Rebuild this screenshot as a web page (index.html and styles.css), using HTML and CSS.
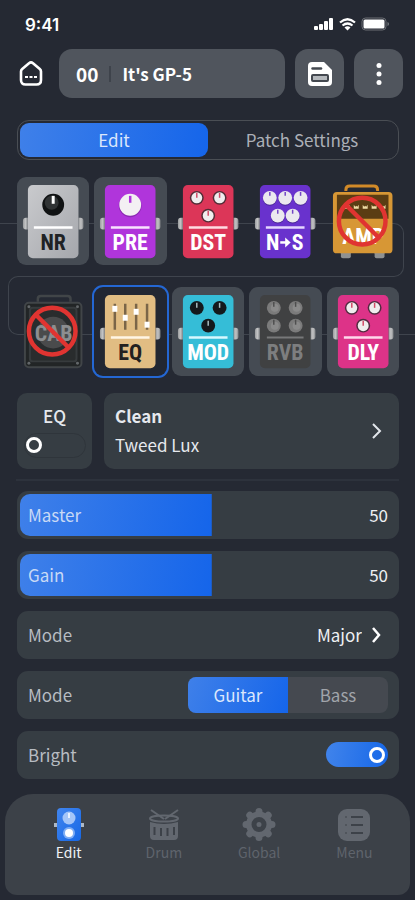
FILE: index.html
```html
<!DOCTYPE html>
<html lang="en">
<head>
<meta charset="utf-8">
<meta name="viewport" content="width=device-width, initial-scale=1">
<title>It's GP-5</title>
<link rel="stylesheet" href="styles.css">
</head>
<body>
<svg class="defs" aria-hidden="true">
  <defs>
    <linearGradient id="silver" x1="0" y1="0" x2="1" y2="1"><stop offset="0" stop-color="#c9cacd"/><stop offset="1" stop-color="#a5a7ac"/></linearGradient>
    <linearGradient id="jack" x1="0" y1="0" x2="1" y2="0"><stop offset="0" stop-color="#999b9d"/><stop offset=".5" stop-color="#c3c4c5"/><stop offset="1" stop-color="#85888b"/></linearGradient>
    <linearGradient id="blue" x1="0" y1="0" x2="1" y2="1"><stop offset="0" stop-color="#4185ee"/><stop offset="1" stop-color="#1768e6"/></linearGradient>
    <g id="jacks" fill="url(#jack)"><path d="M8 41h3v12H9q-3 0-3-3v-6q0-3 3-3z"/><path d="M62 41h2q3 0 3 3v6q0 3-3 3h-2z"/></g>
    <g id="knob-l"><circle r="7" fill="#302b2e" opacity=".8"/><circle r="5.500" fill="#f0edee"/><path d="M0-5v5" stroke="#d34a66" stroke-width="1.5"/></g>
    <g id="knob-w"><circle cy="1" r="7" fill="#4a2796"/><circle r="7" fill="#ebe8ef"/><path d="M0-6v4" stroke="#7345c5" stroke-width="1.5"/></g>
    <g id="knob-d"><circle r="7" fill="#14191c"/><path d="M0-5v5" stroke="#a8bdc1" stroke-width="1.5"/></g>
    <g id="knob-g"><circle r="7" fill="#7b7b7b"/><circle cx="1" r="4" fill="#8a8a8a"/><path d="M0-6v5" stroke="#4e4e4e" stroke-width="1.5"/></g>
    <g id="ban" fill="none" stroke="#e03431" stroke-width="4.5"><circle r="23.5"/><path d="M-16.5-16.5l33 33"/></g>
  </defs>
</svg>
<div class="app">
  <div class="status">
    <span class="time">9:41</span>
    <svg class="signals" width="76" height="16" viewBox="0 0 76 16" aria-hidden="true">
      <g fill="#fff"><rect x="0" y="9" width="4" height="4" rx="1"/><rect x="5" y="7" width="4" height="6" rx="1"/><rect x="10" y="4" width="4" height="9" rx="1"/><rect x="15" y="1" width="4" height="12" rx="1"/></g>
      <g fill="none" stroke="#fff" stroke-width="2.2"><path d="M26 5.5q7.500-6.500 15 0"/><path d="M28.500 8.500q5-4 10 0"/></g><path d="M30.500 10.500q3-2.300 6 0l-3 3z" fill="#fff"/>
      <rect x="48" y="1" width="24" height="12" rx="3.500" fill="none" stroke="#6c6f75"/><rect x="49.500" y="2.500" width="21" height="9" rx="1.500" fill="#fff"/><path d="M73.500 5v4q1.500-.5 1.500-2t-1.500-2" fill="#777b80"/>
    </svg>
  </div>

  <header class="header">
    <button class="home" aria-label="Home">
      <svg width="26" height="28" viewBox="0 0 26 28" fill="none"><path d="M3 11.500Q3 10 4.200 9L11 3.200q2-1.600 4 0L21.800 9Q23 10 23 11.500V20q0 4.500-4.500 4.500h-11Q3 24.500 3 20z" stroke="#fff" stroke-width="2.600" stroke-linejoin="round"/><path d="M7 17h3m1.500 0h3m1.500 0h3" stroke="#fff" stroke-width="2.200"/></svg>
    </button>
    <button class="patch"><span class="patch-number">00</span><i></i><span>It's GP-5</span></button>
    <button class="tool" aria-label="Save">
      <svg width="24" height="24" viewBox="0 0 24 24"><path d="M4 0h12l8 8v12q0 4-4 4H4q-4 0-4-4V4q0-4 4-4z" fill="#fff"/><path d="M4.500 6.500h8.500" stroke="#444950" stroke-width="2.500" stroke-linecap="round"/><rect x="4" y="13" width="16" height="6" rx="1" fill="#b5b9bd" stroke="#444950" stroke-width="2"/></svg>
    </button>
    <button class="tool" aria-label="More">
      <svg width="6" height="24" viewBox="0 0 6 24" fill="#fff"><circle cx="3" cy="3.500" r="2.500"/><circle cx="3" cy="12" r="2.500"/><circle cx="3" cy="20.500" r="2.500"/></svg>
    </button>
  </header>

  <div class="tabs"><button class="tab active">Edit</button><button class="tab">Patch Settings</button></div>

  <section class="chain">
    <i class="wire wire-in"></i><i class="wire wire-right"></i><i class="wire wire-left"></i><i class="wire wire-out"></i>
    <button class="pedal filled"><svg viewBox="0 0 73 89">
      <use href="#jacks"/><rect x="11" y="8" width="51" height="74" rx="5" fill="url(#silver)"/><circle cx="36.500" cy="28" r="11" fill="#101213"/><circle cx="35" cy="26" r="7" fill="#303334"/><path d="M36.500 19v8" stroke="#fff" stroke-width="3"/><path d="M17 51h39" stroke="#fff" stroke-width="2.500"/><text x="36.500" y="74" fill="#202224">NR</text></svg></button>
    <button class="pedal filled"><svg viewBox="0 0 73 89">
      <use href="#jacks"/><rect x="11" y="8" width="51" height="74" rx="5" fill="#b035db"/><circle cx="36.500" cy="29" r="11.500" fill="#8c29b4"/><circle cx="36.500" cy="28" r="11" fill="#f3f0f3"/><path d="M36.500 19v7" stroke="#b035db" stroke-width="2.500"/><path d="M17 51h39" stroke="#f8e3ff" stroke-width="2.500"/><text x="36.500" y="74" fill="#fff">PRE</text></svg></button>
    <button class="pedal"><svg viewBox="0 0 73 89">
      <use href="#jacks"/><rect x="11" y="8" width="51" height="74" rx="5" fill="#dc3658"/><use href="#knob-l" x="25" y="21"/><use href="#knob-l" x="48" y="21"/><use href="#knob-l" x="36.500" y="39"/><path d="M17 51h39" stroke="#ffdce3" stroke-width="2.500"/><text x="36.500" y="74" fill="#fff">DST</text></svg></button>
    <button class="pedal"><svg viewBox="0 0 73 89">
      <use href="#jacks"/><rect x="11" y="8" width="51" height="74" rx="5" fill="#6932cd"/><use href="#knob-w" x="21" y="21"/><use href="#knob-w" x="36.500" y="21"/><use href="#knob-w" x="52" y="21"/><use href="#knob-w" x="29" y="39"/><use href="#knob-w" x="44" y="39"/><path d="M17 51h39" stroke="#e4d6ff" stroke-width="2.500"/><text x="24" y="74" fill="#fff">N</text><text x="49" y="74" fill="#fff">S</text><path d="M31.500 66h7" stroke="#fff" stroke-width="2.500"/><path d="M36.500 61l5.500 5-5.500 5z" fill="#fff"/></svg></button>
    <button class="pedal"><svg viewBox="0 0 73 89">
      <path d="M19 14V13q0-4 4-4h24q4 0 4 4v1" fill="none" stroke="#d28a28" stroke-width="3"/><rect x="14" y="75" width="10" height="7" rx="2" fill="#8f9191"/><rect x="48" y="75" width="10" height="7" rx="2" fill="#8f9191"/><rect x="6" y="15" width="60" height="62" rx="4" fill="#d79735"/><path d="M10 18h52v24H10z" fill="#5b3d13"/><g fill="#f0dca6"><path id="tick" d="M18 28l1.500 2 1-1 1 1 1.500-2v4h-5z"/><use href="#tick" x="9"/><use href="#tick" x="18"/><use href="#tick" x="27"/><use href="#tick" x="36"/></g><text x="36.500" y="68" fill="#fff">AMP</text><use href="#ban" x="35.500" y="44.500"/></svg></button>

    <button class="pedal"><svg viewBox="0 0 73 89">
      <path d="M21 15v-3q0-3 3-3h27q3 0 3 3v3" fill="none" stroke="#414548" stroke-width="2.500"/><rect x="8" y="16" width="57" height="65" rx="4" fill="#222526" stroke="#414548" stroke-width="2"/><rect x="13" y="21" width="47" height="54" rx="3" fill="#292c2d" stroke="#373b3d" stroke-width="2"/><g fill="#63676a"><circle cx="12" cy="20" r="1.500"/><circle cx="61" cy="20" r="1.500"/><circle cx="12" cy="77" r="1.500"/><circle cx="61" cy="77" r="1.500"/></g><circle cx="36.500" cy="46" r="16" fill="#4a4b4c"/><text x="37" y="54" fill="#8c8e90">CAB</text><use href="#ban" x="35.500" y="44.500"/></svg></button>
    <button class="pedal selected"><svg viewBox="0 0 73 89">
      <use href="#jacks"/><rect x="11" y="8" width="51" height="74" rx="5" fill="#e1bd83"/><path d="M21 17v26M31.500 17v26M42.500 17v26M53.500 17v26" stroke="#7a6548" stroke-width="2.500"/><g fill="#fff"><rect x="18.500" y="19" width="5" height="6"/><rect x="29" y="28" width="5" height="6"/><rect x="40" y="22" width="5" height="6"/><rect x="51" y="35" width="5" height="6"/></g><path d="M17 51h39" stroke="#fff6e4" stroke-width="2.500"/><text x="36.500" y="74" fill="#22211f">EQ</text></svg></button>
    <button class="pedal filled"><svg viewBox="0 0 73 89">
      <use href="#jacks"/><rect x="11" y="8" width="51" height="74" rx="5" fill="#35bdd7"/><use href="#knob-d" x="25" y="21"/><use href="#knob-d" x="48" y="21"/><use href="#knob-d" x="36.500" y="39"/><path d="M17 51h39" stroke="#d7f9ff" stroke-width="2.500"/><text x="36.500" y="74" fill="#fff">MOD</text></svg></button>
    <button class="pedal filled"><svg viewBox="0 0 73 89">
      <use href="#jacks"/><rect x="11" y="8" width="51" height="74" rx="5" fill="#404142"/><use href="#knob-g" x="25" y="21"/><use href="#knob-g" x="47" y="21"/><use href="#knob-g" x="25" y="39"/><use href="#knob-g" x="47" y="39"/><path d="M18 51h37" stroke="#777879" stroke-width="2"/><text x="36.500" y="74" fill="#7d7e7f">RVB</text></svg></button>
    <button class="pedal filled"><svg viewBox="0 0 73 89">
      <use href="#jacks"/><rect x="11" y="8" width="51" height="74" rx="5" fill="#dd3388"/><use href="#knob-l" x="25" y="21"/><use href="#knob-l" x="48" y="21"/><use href="#knob-l" x="36.500" y="39"/><path d="M17 51h39" stroke="#ffd8ec" stroke-width="2.500"/><text x="36.500" y="74" fill="#fff">DLY</text></svg></button>
  </section>

  <section class="module">
    <label class="card power"><span>EQ</span><input type="checkbox" class="switch"></label>
    <button class="card preset"><span class="preset-text"><b>Clean</b><span>Tweed Lux</span></span>
      <svg width="12" height="18" viewBox="0 0 12 18" fill="none"><path d="M2 2l7 7-7 7" stroke="#e2e6eb" stroke-width="2"/></svg></button>
  </section>
  <hr>

  <section class="params">
    <div class="row slider"><input id="master" type="range" value="50"><label for="master">Master</label><output for="master">50</output></div>
    <div class="row slider"><input id="gain" type="range" value="50"><label for="gain">Gain</label><output for="gain">50</output></div>
    <div class="row"><label for="scale">Mode</label><span class="picker"><select id="scale"><option>Major</option></select>
      <svg width="12" height="18" viewBox="0 0 12 18" fill="none"><path d="M2 2l6 7-6 7" stroke="#fff" stroke-width="2.500"/></svg></span></div>
    <div class="row"><span id="instrument">Mode</span><div class="segment" role="group" aria-labelledby="instrument"><button class="active">Guitar</button><button>Bass</button></div></div>
    <div class="row"><label for="bright">Bright</label><input id="bright" type="checkbox" class="switch" checked></div>
  </section>

  <nav class="nav">
    <a href="#edit" class="current"><svg width="34" height="36" viewBox="0 0 34 36"><path d="M2 16h3v4H2zM29 16h3v4h-3z" fill="#aeb8c5"/><rect x="5" y="1" width="24" height="33" rx="4" fill="url(#blue)"/><circle cx="17" cy="11" r="6.500" fill="#a4c5f8"/><path d="M17 6v5" stroke="#e7f1ff" stroke-width="2"/><circle cx="17" cy="26" r="6" fill="#7faef5"/><circle cx="17" cy="26" r="4" fill="#fff"/></svg>Edit</a>
    <a href="#drum"><svg width="34" height="36" viewBox="0 0 34 36"><g fill="none" stroke="#62676f" stroke-width="2"><path d="M4 3l13 9M31 3l-13 9"/><ellipse cx="17" cy="11.500" rx="14" ry="3"/></g><path d="M3 15q14 4 28 0v14q0 4-4 4H7q-4 0-4-4z" fill="#62676f"/><path d="M7.500 20v8M14 21v8M20.500 21v8M27 20v8" stroke="#3c4148" stroke-width="2"/></svg>Drum</a>
    <a href="#global"><svg width="34" height="36" viewBox="0 0 34 36"><g fill="#62676f"><circle cx="17" cy="17.500" r="13"/><g stroke="#62676f" stroke-width="7" stroke-linecap="round"><path d="M17 4.500v26M4 17.500h26M7.800 8.300l18.400 18.400M7.800 26.700L26.200 8.300"/></g></g><circle cx="17" cy="17.500" r="5" fill="none" stroke="#3d4249" stroke-width="5"/></svg>Global</a>
    <a href="#menu"><svg width="34" height="36" viewBox="0 0 34 36"><rect x="1" y="2" width="32" height="32" rx="9" fill="#62676f"/><path d="M14 10h12M14 18h12M14 26h12" stroke="#3d4249" stroke-width="2"/><path d="M8 10h2M8 18h2M8 26h2" stroke="#50555c" stroke-width="2"/></svg>Menu</a>
  </nav>
</div>
</body>
</html>
```
FILE: styles.css
```css
*, ::before { box-sizing: border-box; }
body {
  margin: 0;
  background: #252933;
  color: #e6e9ee;
  font: 17px/24px "Noto Sans CJK SC", "Noto Sans", sans-serif;
}
button, select {
  margin: 0;
  padding: 0;
  border: 0;
  background: none;
  color: inherit;
  font: inherit;
}
svg { display: block; flex: none; }
.defs { position: absolute; width: 0; height: 0; }
.app {
  display: flex;
  flex-direction: column;
  min-height: 100vh;
  padding-bottom: 5px;
}

.status {
  display: flex;
  justify-content: space-between;
  align-items: center;
  height: 49px;
  padding: 0 25px;
}
.time { color: #fff; font: 600 17px/24px Inter, sans-serif; }

.header { display: flex; align-items: center; gap: 10px; padding: 0 12px 0 18px; }
.home { width: 31px; }
.patch, .tool { height: 49px; border-radius: 13px; background: #50555d; color: #fff; }
.patch { display: flex; flex: 1; align-items: center; padding: 0 17px; font-weight: 700; }
.patch i { width: 2px; height: 16px; margin: 0 11px; background: #3e434b; }
.patch-number { font-size: 19px; }
.tool { display: grid; place-items: center; width: 49px; }

.tabs {
  display: flex;
  height: 40px;
  margin: 22px 16px 0 17px;
  padding: 2px;
  border: 1px solid #4a4e54;
  border-radius: 12px;
}
.tab { flex: 1; border-radius: 9px; color: #abafb7; }
.tab.active { background: linear-gradient(100deg, #3f80e9, #1565ea); color: #dbe7fc; }

.chain {
  position: relative;
  display: grid;
  grid-template-columns: repeat(5, 1fr);
  gap: 22px 5px;
  margin-top: 17px;
  padding: 0 16px 0 17px;
}
.wire { position: absolute; border: 0 solid #3f444d; }
.wire-in { top: 46px; left: 0; right: 50%; border-top-width: 1px; }
.wire-right { top: 46px; left: 50%; right: 11px; height: 54px; border-width: 1px 1px 1px 0; border-radius: 0 10px 10px 0; }
.wire-left { top: 99px; left: 8px; right: 50%; height: 59px; border-width: 1px 0 1px 1px; border-radius: 10px 0 0 10px; }
.wire-out { top: 157px; left: 50%; right: 0; border-top-width: 1px; }
.pedal { position: relative; border-radius: 9px; }
.pedal svg { width: 100%; }
.pedal text { font: 700 22px "Liberation Sans Narrow", "Roboto Condensed", Roboto, sans-serif; text-anchor: middle; }
.filled { background: #454b53; }
.selected { background: #222732; box-shadow: 0 0 0 2px #2467d3; }

.module { display: flex; gap: 12px; margin: 17px 16px 10px 17px; }
.card { border-radius: 10px; background: #363d43; }
.power {
  display: flex;
  flex-direction: column;
  align-items: center;
  gap: 5px;
  width: 75px;
  height: 76px;
  padding-top: 11px;
  font-weight: 500;
}
.preset { display: flex; flex: 1; align-items: center; justify-content: space-between; padding: 0 16px 0 11px; text-align: left; }
.preset-text { display: grid; gap: 5px; }
.preset b { font-weight: 700; }
hr { height: 2px; margin: 0 16px; border: 0; background: #2d323c; }

.switch {
  appearance: none;
  display: flex;
  align-items: center;
  width: 62px;
  height: 25px;
  margin: 0;
  padding: 0 3px;
  border: 1px solid #2f353b;
  border-radius: 13px;
}
.switch::before {
  content: "";
  width: 16px;
  height: 16px;
  border: 3px solid #fff;
  border-radius: 50%;
}
.power .switch { padding: 0 1px; }
.switch:checked { justify-content: flex-end; border: 0; background: linear-gradient(100deg, #4184eb, #1667e8); }

.params { display: grid; gap: 12px; margin: 10px 16px 15px 17px; }
.row {
  display: flex;
  align-items: center;
  justify-content: space-between;
  height: 48px;
  padding: 0 11px;
  border-radius: 11px;
  background: #363d43;
  color: #b7bcc2;
}
.slider { position: relative; color: #c8d9f5; }
.slider label, .slider output { position: relative; pointer-events: none; }
.slider output { color: #eef0f3; }
.slider input {
  appearance: none;
  position: absolute;
  inset: 3px;
  margin: 0;
  border-radius: 10px;
  background: linear-gradient(100deg, #3f80e9, #1565ea) 0 0 / 51% 100% no-repeat;
}
.slider input::-webkit-slider-thumb { appearance: none; width: 1px; height: 42px; }
.picker { display: flex; align-items: center; gap: 9px; padding-right: 5px; color: #eef0f3; }
.picker select { appearance: none; }
.segment { display: flex; width: 200px; height: 36px; border-radius: 8px; overflow: hidden; background: #454950; }
.segment button { flex: 1; color: #a0a4aa; }
.segment .active { background: linear-gradient(110deg, #3f80e9, #1565ea); color: #dbe7fc; }

.nav {
  display: grid;
  grid-template-columns: repeat(4, 1fr);
  flex: 1;
  margin: 0 5px;
  padding: 13px 8px 24px 16px;
  border-radius: 28px 28px 12px 12px;
  background: #3c4148;
}
.nav a { display: flex; flex-direction: column; align-items: center; color: #5f646c; font-size: 14px; line-height: 18px; text-decoration: none; }
.nav .current { color: #eff2f6; }
```
